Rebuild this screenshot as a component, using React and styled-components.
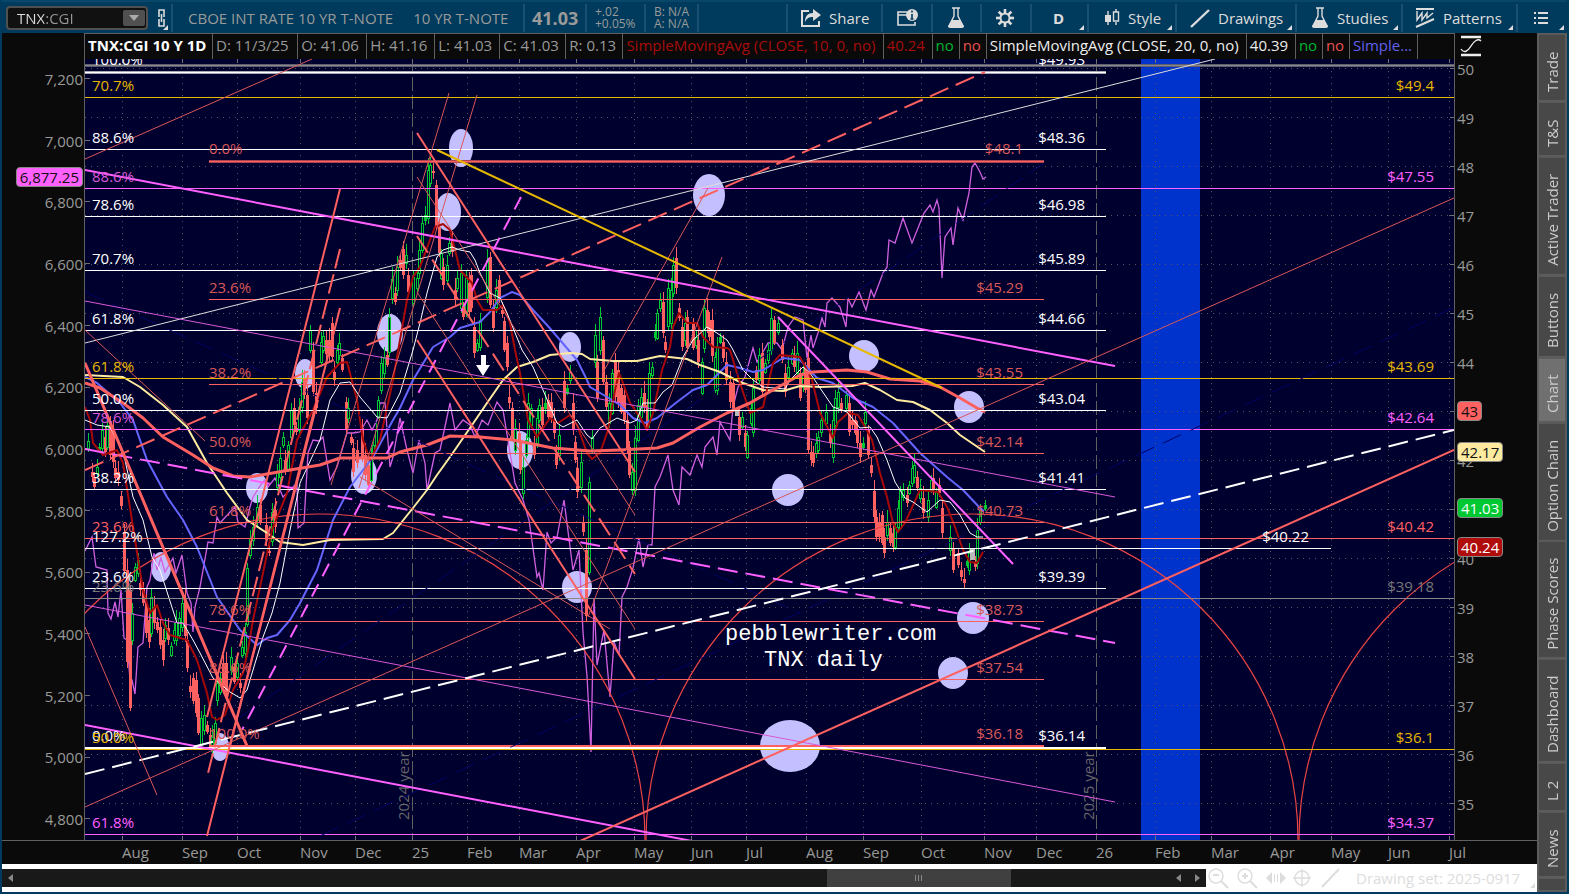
import React from 'react'
import styled, { createGlobalStyle } from 'styled-components'

const GlobalStyle = createGlobalStyle`
  * { box-sizing: border-box; }
  body {
    margin: 0;
    background: #003a5c;
    color: #999;
    font-family: 'Open Sans', 'Noto Sans', sans-serif;
    font-size: 15px;
  }
  button, select { font: inherit; }
`

const GREEN = '#00c832'
const RED = '#ff6060'
const PINK = '#ff60ff'
const GOLD = '#e6b800'
const NIGHT = '#00002e'

const Page = styled.main`
  min-height: 100vh;
  padding: 0 2px 2px;
  background: #003a5c;
  overflow: hidden;
`

/* ---------- toolbar ---------- */

const Toolbar = styled.header`
  display: flex;
  align-items: center;
  height: 33px;
  border-top: 2px solid #08466a;
  white-space: nowrap;
`

const Cell = styled.div`
  flex: none;
  display: flex;
  align-items: center;
  width: ${p => p.$w}px;
  height: 28px;
  padding-left: ${p => p.$pad || 8}px;
  border-right: ${p => (p.$open ? '0' : '2px')} solid #1a4f74;
  color: #9a9a9a;
  gap: 20px;
`

const Fill = styled(Cell)`
  flex: 1;
`

const Description = styled.span`
  font-size: 15px;
`

const LastPrice = styled.strong`
  font-size: 18px;
`

const Stack = styled.div`
  font-size: 12px;
  line-height: 12px;
`

const SymbolSelect = styled.div`
  display: flex;
  flex: none;
  align-items: center;
  width: 142px;
  height: 24px;
  margin-left: 4px;
  border: 2px solid #505050;
  border-radius: 4px;
  background: #111;
`

const Select = styled.select`
  flex: 1;
  height: 20px;
  padding: 0 9px;
  border: 0;
  background: linear-gradient(90deg, #e0e0e0 36px, #999 36px);
  background-clip: text;
  color: transparent;
  appearance: none;
  font-size: 15px;
  line-height: 20px;
`

const Arrow = styled.span`
  display: flex;
  align-items: center;
  justify-content: center;
  width: 22px;
  height: 16px;
  margin-right: 1px;
  border-radius: 2px;
  background: #505050;
  pointer-events: none;
`

const ToolButton = styled.button`
  position: relative;
  flex: none;
  display: flex;
  align-items: center;
  gap: 8px;
  width: ${p => p.$w}px;
  height: 28px;
  padding: 0 0 0 ${p => p.$pad}px;
  border: 0;
  border-right: ${p => (p.$open ? '0' : '2px')} solid #1a4f74;
  background: transparent;
  color: #ddd;
  font-weight: ${p => (p.$bold ? 700 : 400)};
  &::after {
    content: '';
    display: ${p => (p.$menu ? 'block' : 'none')};
    position: absolute;
    right: 3px;
    bottom: 2px;
    border-left: 5px solid transparent;
    border-bottom: 5px solid #ddd;
  }
`

const Icon = ({ w = 20, h = 22, children }) => (
  <svg width={w} height={h} viewBox={`0 0 ${w} ${h}`} fill='none' stroke='#ddd' strokeWidth='2' aria-hidden='true'>
    {children}
  </svg>
)

const LinkIcon = () => (
  <Icon w={12} h={20}>
    <path d='M3 9V2h5v7M3 11v7h5v-7M5.5 6v8' strokeWidth='1.6' />
  </Icon>
)

const ShareIcon = () => (
  <Icon>
    <path d='M8 4H1v15h17v-5' />
    <path d='M12 2l8 6-8 6v-4c-4 0-6 1-8 5 0-6 3-9 8-9z' fill='#ddd' stroke='none' />
  </Icon>
)

const InfoIcon = () => (
  <Icon w={22}>
    <path d='M10 5H1v13h17v-3M1 8h9' strokeWidth='1.6' />
    <circle cx='15' cy='8' r='6' fill='#ddd' stroke='none' />
    <path d='M15 7v5M15 3.5v2M13.500 12h3' stroke='#003a5c' strokeWidth='1.6' />
  </Icon>
)

const FlaskIcon = () => (
  <Icon w={18}>
    <path d='M5 1h8M7 1v8L2 19h14L11 9V1' strokeWidth='1.4' />
    <path d='M5 13h8l4 6q0 2-2 2H3q-2 0-2-2z' fill='#ddd' stroke='none' />
  </Icon>
)

const GearIcon = () => (
  <Icon w={18} h={18}>
    <circle cx='9' cy='9' r='4.500' />
    {[0, 45, 90, 135, 180, 225, 270, 315].map(a => (
      <path key={a} d='M9 0v4' strokeWidth='2.600' transform={`rotate(${a} 9 9)`} />
    ))}
  </Icon>
)

const StyleIcon = () => (
  <Icon w={16}>
    <path d='M4 4v14M12 2v3M12 15v3' strokeWidth='1.4' />
    <path d='M1 8h6v7H1z' fill='#ddd' stroke='none' />
    <path d='M9.500 5h5v9h-5z' strokeWidth='1.4' />
  </Icon>
)

const LineIcon = () => (
  <Icon>
    <path d='M1 20L19 3' strokeWidth='2.400' />
  </Icon>
)

const PatternIcon = () => (
  <Icon>
    <path d='M1 2h18M1 20l18-8' />
    <path d='M2 4v9l5-7v7l5-7v5l6-5' strokeWidth='1.4' />
  </Icon>
)

const ListIcon = () => (
  <Icon w={14} h={14}>
    <path d='M4 2h10M4 7h10M4 12h10M0 2h2M0 7h2M0 12h2' />
  </Icon>
)

const AxisIcon = () => (
  <Icon w={22} h={24}>
    <path d='M1 4h20M1 22h20' stroke='#eee' strokeWidth='2.400' />
    <path d='M1 16c3 5 7 2 10-3s7-8 10-5' stroke='#eee' strokeWidth='1.400' />
  </Icon>
)

const tools = [
  { w: 95, pad: 13, icon: <ShareIcon />, label: 'Share' },
  { w: 50, pad: 14, icon: <InfoIcon />, title: 'Info' },
  { w: 49, pad: 14, icon: <FlaskIcon />, title: 'Lab' },
  { w: 50, pad: 14, icon: <GearIcon />, title: 'Settings' },
  { w: 57, pad: 21, label: 'D', menu: true, bold: true },
  { w: 88, pad: 15, icon: <StyleIcon />, label: 'Style', menu: true },
  { w: 120, pad: 13, icon: <LineIcon />, label: 'Drawings', menu: true },
  { w: 106, pad: 14, icon: <FlaskIcon />, label: 'Studies', menu: true },
  { w: 115, pad: 12, icon: <PatternIcon />, label: 'Patterns', menu: true },
  { w: 49, pad: 16, icon: <ListIcon />, title: 'List', menu: true, open: true }
]

/* ---------- study strip ---------- */

const Body = styled.div`
  display: flex;
  background: #0a0a0a;
`

const ChartColumn = styled.section`
  flex: 1;
  min-width: 0;
  background: #0a0a0a;
`

const Strip = styled.div`
  display: grid;
  grid-template-columns: 82px minmax(0, 1fr) 82px;
  height: 26px;
`

const StudyCells = styled.div`
  display: grid;
  grid-template-columns: ${p => p.$widths.map(w => `minmax(0, ${w}fr)`).join(' ')};
  border: 1px solid #606060;
  border-right: 0;
`

const StudyCell = styled.span`
  padding-left: 3px;
  border-right: 1px solid #606060;
  color: ${p => p.$color || '#999'};
  font-weight: ${p => (p.$bold ? 700 : 400)};
  font-size: 15px;
  line-height: 23px;
  white-space: nowrap;
  overflow: hidden;
`

const StripIcon = styled.div`
  padding-left: 5px;
`

const studies = [
  [128, 'TNX:CGI 10 Y 1D', '#fff', true],
  [85, 'D: 11/3/25'],
  [69, 'O: 41.06'],
  [68, 'H: 41.16'],
  [65, 'L: 41.03'],
  [66, 'C: 41.03'],
  [57, 'R: 0.13'],
  [260, 'SimpleMovingAvg (CLOSE, 10, 0, no)', '#a80c0c'],
  [49, '40.24', '#a80c0c'],
  [27, 'no', '#00b432'],
  [27, 'no', '#e65050'],
  [260, 'SimpleMovingAvg (CLOSE, 20, 0, no)', '#eee'],
  [49, '40.39', '#eee'],
  [27, 'no', '#00b432'],
  [27, 'no', '#e65050'],
  [68, 'Simple...', '#6060f0'],
  [37, '']
]

/* ---------- chart ---------- */

const PlotRow = styled.div`
  display: grid;
  grid-template-columns: 82px minmax(0, 1fr) 82px;
`

const Plot = styled.div`
  border: solid #606060;
  border-width: 0 1px;
`

const Canvas = styled.svg`
  display: block;
  width: 100%;
  height: auto;
  background: ${NIGHT};
  font-size: 15px;
`

const Axis = styled.div`
  position: relative;
  display: flex;
  flex-direction: column;
  justify-content: space-between;
  padding: ${p => (p.$left ? '10px 1px 11px 0' : '0 0 26px 2px')};
  text-align: ${p => (p.$left ? 'right' : 'left')};
  line-height: 20px;
`

const Badge = styled.span`
  position: absolute;
  top: ${p => ((p.$y - 59) / 781) * 100}%;
  ${p => (p.$left ? 'right: 1px;' : 'left: 2px;')}
  height: 20px;
  padding: 0 3px;
  border: 1px solid #888;
  border-radius: 4px;
  background: ${p => p.$bg};
  color: ${p => p.$fg || '#111'};
  line-height: 18px;
`

const months = [
  [122, 'Aug'], [182, 'Sep'], [237, 'Oct'], [300, 'Nov'], [355, 'Dec'], [412, '25'],
  [467, 'Feb'], [519, 'Mar'], [576, 'Apr'], [634, 'May'], [691, 'Jun'], [746, 'Jul'],
  [806, 'Aug'], [863, 'Sep'], [921, 'Oct'], [984, 'Nov'], [1036, 'Dec'], [1096, '26'],
  [1155, 'Feb'], [1211, 'Mar'], [1270, 'Apr'], [1331, 'May'], [1388, 'Jun'], [1449, 'Jul']
]

const monthSpans = months.map(([x], i) => (months[i + 1] ? months[i + 1][0] : 1537) - x)

const TimeAxis = styled.div`
  display: grid;
  grid-template-columns: 120fr ${monthSpans.map(s => `${s}fr`).join(' ')};
  height: 24px;
  border-top: 1px solid #606060;
  line-height: 23px;
  white-space: nowrap;
`

const Month = styled.span`
  min-width: 0;
`

// [x, body top, body bottom, up]
const candles = [
  [88, 441, 448, 1], [92, 472, 477, 0], [94, 477, 487, 0], [97, 467, 473, 1], [99, 447, 450, 1], [102, 430, 448, 1],
  [105, 437, 452, 0], [107, 425, 447, 1], [110, 425, 455, 0], [113, 432, 462, 0], [115, 468, 478, 0], [118, 472, 480, 0],
  [121, 496, 506, 0], [124, 532, 571, 0], [127, 570, 662, 0], [130, 590, 708, 0], [132, 613, 640, 1], [135, 567, 580, 1],
  [138, 560, 573, 1], [140, 583, 590, 0], [143, 588, 603, 0], [146, 603, 633, 0], [149, 620, 642, 0], [151, 597, 633, 1],
  [154, 607, 623, 0], [157, 622, 630, 0], [160, 627, 645, 0], [163, 640, 660, 0], [165, 625, 638, 1], [168, 628, 640, 0],
  [171, 646, 655, 1], [174, 630, 640, 1], [176, 622, 640, 1], [179, 618, 635, 1], [182, 603, 627, 1], [185, 600, 636, 0],
  [187, 640, 668, 0], [190, 686, 692, 0], [193, 678, 701, 0], [196, 680, 713, 0], [198, 698, 733, 0], [201, 718, 745, 1],
  [204, 715, 730, 1], [207, 725, 732, 0], [210, 735, 745, 0], [212, 737, 750, 1], [215, 723, 743, 1], [217, 683, 700, 1],
  [220, 678, 692, 1], [223, 663, 687, 0], [226, 663, 692, 0], [231, 657, 670, 1], [234, 667, 682, 0], [237, 663, 677, 1],
  [240, 683, 688, 0], [242, 647, 655, 1], [245, 632, 653, 1], [247, 568, 624, 1], [250, 538, 555, 1], [253, 527, 540, 1],
  [257, 507, 520, 1], [260, 505, 522, 0], [266, 525, 540, 0], [269, 551, 553, 0], [272, 512, 541, 1], [275, 510, 527, 0],
  [277, 472, 487, 1], [280, 458, 477, 1], [283, 437, 445, 1], [285, 460, 470, 0], [288, 445, 470, 1], [291, 410, 437, 1],
  [294, 408, 425, 0], [296, 428, 432, 0], [299, 407, 430, 1], [302, 382, 407, 1], [304, 378, 395, 0], [307, 395, 418, 0],
  [310, 330, 350, 1], [313, 350, 392, 0], [316, 393, 408, 0], [321, 342, 362, 1], [323, 336, 350, 1], [326, 340, 354, 0],
  [329, 340, 356, 0], [332, 323, 357, 0], [334, 372, 380, 0], [337, 350, 362, 1], [339, 343, 355, 1], [342, 358, 370, 0],
  [346, 402, 430, 0], [348, 408, 418, 1], [351, 437, 443, 0], [353, 448, 472, 0], [357, 450, 463, 0], [362, 428, 457, 0],
  [365, 455, 475, 0], [368, 465, 485, 0], [371, 457, 480, 1], [373, 445, 453, 1], [376, 430, 447, 1], [378, 400, 417, 1],
  [381, 363, 390, 1], [384, 357, 373, 1], [387, 355, 365, 0], [389, 317, 352, 1], [392, 279, 298, 1], [395, 293, 302, 0],
  [397, 267, 290, 1], [400, 260, 268, 0], [403, 249, 275, 0], [406, 255, 263, 1], [408, 275, 292, 0], [413, 277, 303, 1],
  [417, 278, 288, 1], [419, 250, 273, 1], [422, 223, 250, 1], [425, 215, 220, 1], [428, 170, 218, 1], [430, 165, 183, 1],
  [433, 171, 173, 0], [436, 185, 227, 0], [439, 227, 253, 0], [441, 253, 278, 1], [443, 267, 285, 0], [447, 265, 280, 1],
  [449, 243, 253, 1], [452, 240, 252, 0], [455, 290, 300, 0], [457, 278, 288, 1], [461, 273, 308, 1], [463, 307, 317, 0],
  [466, 278, 313, 1], [469, 283, 312, 0], [471, 275, 308, 0], [474, 327, 353, 0], [477, 343, 350, 1], [480, 320, 347, 1],
  [487, 260, 297, 1], [490, 257, 305, 0], [493, 307, 328, 0], [496, 290, 307, 1], [499, 280, 300, 0], [502, 310, 314, 0],
  [504, 321, 350, 0], [507, 343, 367, 0], [509, 397, 403, 0], [512, 408, 438, 0], [515, 428, 450, 1], [519, 433, 443, 0],
  [520, 443, 470, 0], [523, 467, 493, 1], [526, 440, 455, 1], [528, 403, 437, 1], [531, 408, 425, 1], [534, 443, 455, 0],
  [537, 418, 443, 1], [539, 405, 420, 1], [542, 407, 425, 0], [545, 403, 408, 1], [548, 400, 417, 0], [551, 402, 418, 0],
  [554, 420, 433, 0], [556, 453, 465, 0], [559, 435, 455, 1], [564, 381, 408, 0], [567, 388, 393, 1], [570, 372, 380, 1],
  [573, 403, 430, 0], [575, 442, 460, 0], [577, 468, 492, 0], [581, 462, 487, 1], [583, 523, 532, 0], [586, 550, 616, 0],
  [589, 482, 572, 1], [592, 437, 450, 1], [595, 335, 362, 1], [597, 362, 398, 0], [600, 317, 350, 1], [603, 340, 382, 0],
  [606, 382, 407, 0], [609, 403, 423, 1], [612, 373, 413, 1], [615, 360, 397, 0], [618, 370, 403, 0], [621, 388, 412, 0],
  [624, 395, 420, 0], [627, 420, 448, 0], [629, 447, 475, 0], [632, 472, 490, 1], [635, 438, 490, 1], [638, 405, 440, 1],
  [641, 397, 417, 1], [644, 393, 407, 0], [647, 405, 428, 0], [649, 373, 422, 1], [652, 367, 375, 1], [655, 332, 337, 1],
  [657, 313, 338, 1], [660, 300, 308, 1], [663, 302, 333, 0], [665, 342, 350, 0], [668, 288, 326, 1], [671, 290, 323, 1],
  [673, 265, 293, 1], [676, 258, 288, 0], [679, 308, 318, 0], [682, 327, 347, 0], [685, 323, 340, 1], [687, 317, 348, 0],
  [693, 322, 348, 0], [696, 337, 345, 1], [698, 340, 362, 0], [702, 362, 393, 1], [704, 308, 348, 1], [707, 310, 327, 0],
  [709, 320, 337, 0], [712, 320, 356, 0], [715, 357, 390, 1], [717, 347, 390, 1], [720, 337, 342, 1], [723, 342, 358, 0],
  [726, 362, 380, 0], [730, 382, 402, 0], [733, 383, 408, 0], [739, 417, 435, 0], [742, 417, 427, 1], [745, 433, 447, 0],
  [747, 435, 457, 1], [751, 408, 423, 1], [753, 388, 432, 1], [756, 370, 380, 0], [759, 355, 380, 1], [762, 353, 392, 0],
  [765, 363, 372, 1], [768, 350, 360, 1], [771, 318, 350, 1], [774, 320, 343, 0], [778, 323, 332, 1], [782, 345, 360, 0],
  [785, 373, 392, 0], [788, 367, 377, 1], [792, 353, 363, 1], [794, 355, 367, 0], [797, 353, 373, 1], [800, 373, 398, 0],
  [803, 372, 387, 1], [805, 367, 390, 0], [808, 358, 450, 0], [811, 452, 460, 0], [813, 453, 463, 0], [816, 443, 453, 1],
  [818, 437, 450, 1], [821, 420, 432, 1], [826, 412, 423, 1], [830, 433, 443, 0], [833, 420, 457, 1], [835, 398, 425, 1],
  [838, 392, 407, 1], [841, 403, 410, 0], [846, 395, 408, 1], [849, 403, 432, 0], [852, 420, 425, 0], [855, 420, 433, 0],
  [857, 430, 443, 0], [860, 443, 457, 0], [863, 443, 447, 1], [865, 412, 423, 1], [868, 430, 455, 0], [871, 465, 473, 0],
  [874, 491, 517, 0], [876, 517, 537, 0], [879, 523, 537, 0], [882, 515, 543, 0], [884, 537, 553, 0], [887, 522, 535, 1],
  [890, 528, 543, 0], [893, 533, 547, 0], [895, 527, 547, 1], [898, 508, 527, 1], [900, 490, 528, 1], [903, 490, 497, 1],
  [907, 495, 503, 0], [909, 485, 493, 1], [912, 468, 483, 1], [914, 465, 477, 1], [917, 477, 488, 0], [920, 488, 498, 1],
  [923, 498, 513, 0], [928, 500, 517, 1], [931, 480, 490, 1], [933, 478, 490, 0], [936, 492, 507, 1], [939, 485, 493, 0],
  [942, 508, 533, 0], [950, 537, 550, 1], [953, 548, 570, 0], [958, 553, 565, 0], [961, 570, 577, 0], [964, 579, 583, 0],
  [967, 561, 565, 1], [969, 553, 570, 1], [975, 563, 567, 0], [977, 530, 563, 1], [980, 510, 522, 1], [985, 505, 508, 1]
]

const averages = [
  { color: '#6464ff', width: 2, points: '85,377 97,383 120,403 133,420 147,460 167,497 183,520 197,547 217,597 240,630 257,645 267,638 277,635 290,620 300,603 317,570 333,520 350,487 373,457 393,420 400,408 413,380 427,357 433,347 450,337 460,328 480,322 490,312 500,298 512,292 520,295 533,310 547,325 560,340 577,360 587,380 590,387 607,397 620,405 633,418 645,423 657,418 677,402 693,390 707,385 727,365 740,368 753,372 763,370 783,358 800,360 817,378 833,383 853,398 873,407 893,423 920,453 947,477 963,490 980,508 984,511' },
  { color: '#ffebA0', width: 2, points: '85,375 123,377 140,387 163,405 187,427 207,463 227,493 247,520 267,533 280,542 303,545 330,540 383,539 393,533 413,508 427,490 437,475 450,457 470,428 487,403 503,380 517,367 533,362 550,355 570,353 582,354 590,359 613,361 637,361 660,356 687,359 700,365 720,372 740,382 763,390 783,391 800,386 820,387 852,386 865,383 880,390 897,400 913,402 930,410 947,423 960,435 985,452' },
  { color: '#a80808', width: 2, points: '85,407 90,420 93,443 103,455 117,450 123,463 133,527 143,590 150,613 157,605 163,623 170,635 187,640 197,660 207,693 212,717 217,720 225,715 233,690 243,673 248,650 253,620 263,573 272,530 287,493 297,440 313,410 327,377 340,363 347,362 357,400 363,440 370,460 380,440 393,380 400,340 407,300 413,277 420,267 430,240 435,227 443,224 450,230 455,250 460,270 472,283 477,300 483,310 497,310 503,305 510,323 515,350 520,373 528,420 537,437 550,418 558,423 570,415 577,425 587,453 592,459 600,453 608,430 615,390 619,373 623,383 630,403 640,417 647,430 653,413 662,370 670,347 673,327 679,313 687,323 697,323 703,337 713,347 727,348 730,350 740,383 750,413 763,407 773,363 780,355 800,357 807,370 812,380 820,413 833,438 838,422 848,413 858,415 865,427 872,440 880,473 887,497 893,523 898,532 905,523 920,490 938,492 947,507 955,527 963,550 970,562 977,563 983,552' },
  { color: '#fff', width: 1, points: '85,420 97,425 110,427 117,440 125,460 133,497 143,520 152,557 160,570 177,623 183,623 193,640 200,653 213,678 230,692 240,698 247,690 253,670 263,637 272,613 280,583 290,530 300,483 312,457 320,440 330,400 340,383 350,382 360,397 377,417 387,418 400,393 413,350 420,323 427,293 437,257 443,250 452,247 460,250 470,252 475,260 480,273 490,293 500,298 507,313 522,350 533,367 543,390 557,423 563,427 577,420 587,435 592,439 600,428 617,418 630,423 637,420 643,403 655,403 663,392 672,385 683,357 693,340 707,327 717,333 727,340 732,348 743,370 753,380 763,387 785,389 790,380 803,367 810,373 820,388 833,407 847,412 860,428 870,427 877,437 887,460 895,482 905,498 913,502 927,512 940,500 950,502 960,515 970,533 977,537 983,537' },
  { color: RED, width: 3, points: '85,383 100,388 123,403 143,418 163,437 193,455 213,468 233,476 250,477 267,474 290,470 320,465 340,458 387,458 400,452 427,445 450,436 480,437 513,440 553,448 590,451 620,450 657,448 673,443 700,427 727,413 750,403 773,390 800,375 813,372 847,370 867,372 890,379 920,381 940,387 960,398 977,408 985,412' }
]

const spx = '85,551 92,537 96,567 107,570 108,613 111,619 115,602 118,617 121,590 124,638 127,640 130,680 132,680 135,694 138,647 143,643 147,587 150,580 154,553 157,570 161,558 165,572 173,558 176,573 182,555 187,593 191,603 193,632 195,607 200,587 208,542 213,543 217,517 220,523 230,512 235,507 238,522 245,527 250,507 253,497 262,483 265,480 268,487 275,478 283,497 287,493 297,483 298,528 304,523 308,453 313,440 319,441 323,437 330,480 337,467 347,433 353,433 360,432 367,420 372,430 377,420 380,403 385,403 390,467 393,457 400,418 407,450 413,473 419,440 425,463 427,490 435,453 440,450 450,403 455,430 463,420 470,425 475,437 482,420 488,425 497,402 503,410 515,483 523,500 529,520 537,577 539,573 543,590 547,532 551,543 557,537 564,500 573,570 579,550 583,632 587,676 591,752 594,598 597,665 604,630 610,697 614,642 619,655 622,597 627,587 633,568 639,538 643,567 648,545 652,545 655,487 660,477 668,455 673,490 679,505 682,467 690,475 697,455 702,467 705,447 713,437 717,455 720,422 730,440 733,407 738,387 745,377 753,348 757,362 763,352 768,343 777,343 782,350 788,327 795,317 803,320 807,358 811,335 813,348 818,333 822,318 825,327 827,303 832,298 840,307 846,327 848,298 852,307 859,292 866,310 871,290 874,297 883,273 887,267 889,240 895,243 903,218 912,243 920,223 924,213 930,205 933,212 937,200 939,208 942,278 945,237 951,228 953,245 958,208 963,220 969,193 972,167 975,163 980,172 983,179 986,177'

// [y, x1, x2, color, width]
const levels = [
  [65, 85, 1454, '#5e5e70', 3], [65, 85, 1454, '#888', 1], [72, 85, 1106, '#a8a8b4', 3], [72, 85, 1106, '#fff', 1],
  [97, 85, 1454, GOLD, 1], [149, 85, 1106, '#fff', 1],
  [188, 85, 1454, PINK, 1], [216, 85, 1106, '#fff', 1], [270, 85, 1106, '#fff', 1], [330, 85, 1106, '#fff', 1],
  [378, 85, 1454, GOLD, 1], [410, 85, 1106, '#fff', 1], [429, 85, 1454, PINK, 1], [489, 85, 1106, '#fff', 1],
  [538, 85, 1454, RED, 1], [548, 85, 1331, '#fff', 1], [588, 85, 1106, '#fff', 1], [598, 85, 1454, '#888', 1],
  [834, 85, 1454, PINK, 1], [161, 209, 1044, '#a84450', 3], [161, 209, 1044, RED, 1], [299, 209, 1044, RED, 1],
  [384, 209, 1044, RED, 1], [453, 209, 1044, RED, 1], [522, 209, 1044, RED, 1], [621, 209, 1044, RED, 1],
  [679, 209, 1044, RED, 1], [746, 209, 1044, RED, 2], [748, 85, 1106, '#fff', 2], [749, 85, 1454, GOLD, 1]
]

// [x1, y1, x2, y2, color, width, dash]
const trends = [
  [85, 292, 800, 613, '#000066', 1, '20 10'],
  [240, 717, 1044, 163, '#000066', 1, '20 10'],
  [320, 836, 1453, 308, '#000066', 1, '20 10'],
  [85, 159, 312, 59, '#d85858', 1],
  [85, 170, 1115, 366, PINK, 2],
  [85, 343, 1215, 59, '#ddd', 1],
  [85, 301, 1115, 497, '#d858d8', 1],
  [85, 605, 1115, 802, '#d858d8', 1],
  [85, 725, 692, 841, PINK, 2],
  [85, 449, 1115, 643, PINK, 2, '20 8'],
  [521, 197, 242, 730, PINK, 2, '14 9'],
  [778, 317, 1013, 564, PINK, 2],
  [85, 330, 205, 441, '#d85858', 1],
  [85, 470, 985, 72, RED, 2, '20 8'],
  [85, 807, 1454, 198, '#d85858', 1],
  [580, 841, 1454, 450, RED, 2],
  [85, 774, 1454, 430, '#fff', 2, '20 8'],
  [85, 627, 157, 795, '#d85858', 1],
  [85, 363, 247, 746, RED, 3],
  [340, 189, 207, 717, RED, 2],
  [340, 249, 207, 777, RED, 2, '20 6'],
  [340, 308, 207, 836, RED, 2],
  [318, 400, 230, 746, RED, 2],
  [449, 93, 331, 485, '#d85858', 1],
  [477, 95, 359, 488, '#d85858', 1],
  [417, 133, 635, 472, RED, 2],
  [417, 177, 635, 515, '#d85858', 1],
  [417, 236, 635, 574, RED, 2, '20 8'],
  [417, 292, 635, 629, '#d85858', 1],
  [417, 340, 635, 679, RED, 2],
  [360, 477, 610, 629, '#d85858', 1],
  [708, 188, 602, 374, '#d85858', 1],
  [722, 257, 588, 617, '#d85858', 1],
  [437, 150, 942, 388, GOLD, 2]
]

const bubbles = [
  [461, 148, 12, 19], [448, 212, 13, 19], [390, 333, 13, 19], [305, 374, 10, 15], [257, 488, 11, 15],
  [364, 475, 13, 19], [161, 567, 10, 15], [220, 747, 9, 14], [520, 450, 13, 19], [570, 347, 11, 15],
  [577, 587, 15, 16], [709, 195, 16, 21], [864, 356, 15, 16], [969, 407, 15, 16], [788, 490, 16, 16],
  [973, 618, 16, 16], [953, 673, 15, 16], [790, 746, 30, 26]
]

// [x, baseline, text, color, anchor]
const labels = [
  [92, 65, '100.0%', '#fff'], [1085, 65, '$49.93', '#fff', 'end'],
  [92, 91, '70.7%', GOLD], [1434, 91, '$49.4', GOLD, 'end'],
  [92, 143, '88.6%', '#fff'], [1085, 143, '$48.36', '#fff', 'end'],
  [92, 182, '88.6%', '#d858d8'], [1434, 182, '$47.55', PINK, 'end'],
  [92, 210, '78.6%', '#fff'], [1085, 210, '$46.98', '#fff', 'end'],
  [92, 264, '70.7%', '#fff'], [1085, 264, '$45.89', '#fff', 'end'],
  [92, 324, '61.8%', '#fff'], [1085, 324, '$44.66', '#fff', 'end'],
  [92, 372, '61.8%', GOLD], [1434, 372, '$43.69', GOLD, 'end'],
  [92, 404, '50.0%', '#fff'], [1085, 404, '$43.04', '#fff', 'end'],
  [92, 423, '78.6%', '#d858d8'], [1434, 423, '$42.64', PINK, 'end'],
  [92, 483, '38.2%', '#fff'], [1085, 483, '$41.41', '#fff', 'end'],
  [92, 532, '23.6%', RED], [1434, 532, '$40.42', RED, 'end'],
  [92, 542, '127.2%', '#fff'], [1309, 542, '$40.22', '#fff', 'end'],
  [92, 592, '23.6%', '#777'], [1434, 592, '$39.18', '#777', 'end'],
  [92, 582, '23.6%', '#fff'], [1085, 582, '$39.39', '#fff', 'end'],
  [92, 741, '0.0%', '#fff'], [1085, 741, '$36.14', '#fff', 'end'],
  [92, 743, '50.0%', GOLD], [1434, 743, '$36.1', GOLD, 'end'],
  [92, 828, '61.8%', PINK], [1434, 828, '$34.37', PINK, 'end'],
  [209, 154, '0.0%', '#d85858'], [1023, 154, '$48.1', '#d85858', 'end'],
  [209, 293, '23.6%', '#d85858'], [1023, 293, '$45.29', '#d85858', 'end'],
  [209, 378, '38.2%', '#d85858'], [1023, 378, '$43.55', '#d85858', 'end'],
  [209, 447, '50.0%', '#d85858'], [1023, 447, '$42.14', '#d85858', 'end'],
  [209, 516, '61.8%', '#d85858'], [1023, 516, '$40.73', '#d85858', 'end'],
  [209, 615, '78.6%', '#d85858'], [1023, 615, '$38.73', '#d85858', 'end'],
  [209, 673, '88.6%', '#d85858'], [1023, 673, '$37.54', '#d85858', 'end'],
  [209, 739, '100.0%', '#d85858'], [1023, 739, '$36.18', '#d85858', 'end']
]

const priceY = price => Math.round(68 + (50 - price) * 49)
const prices = [50, 49, 48, 47, 46, 45, 44, 43, 42, 41, 40, 39, 38, 37, 36, 35]
const spxTicks = [7200, 7000, 6800, 6600, 6400, 6200, 6000, 5800, 5600, 5400, 5200, 5000, 4800]

const Candle = ({ x, top, bottom, up }) => {
  const reach = 4 + ((x * 7) % 9)
  const color = up ? GREEN : RED
  return (
    <g shapeRendering='crispEdges'>
      <path d={`M${x + 0.5} ${top - reach}V${bottom + reach / 2}`} stroke={color} />
      <rect
        x={up ? x - 0.5 : x - 1}
        y={top}
        width={up ? 2 : 3}
        height={bottom - top}
        fill={up && bottom - top > 5 ? NIGHT : color}
        stroke={up ? color : 'none'}
      />
    </g>
  )
}

const Chart = () => (
  <Canvas viewBox='85 59 1369 781' role='img' aria-label='TNX daily'>
    <rect x='1141' y='59' width='59' height='781' fill='#0032cc' />

    <g stroke='#55555f' strokeDasharray='1 5' shapeRendering='crispEdges'>
      {prices.map(p => <path key={p} d={`M85 ${priceY(p)}.5H1454`} />)}
      {months.filter(m => !Number(m[1])).map(([x]) => <path key={x} d={`M${x}.5 59V840`} />)}
    </g>
    <g stroke='#606060' strokeDasharray='14 4' shapeRendering='crispEdges'>
      <path d='M412.500 59V840M1096.500 59V840' />
    </g>
    <g stroke='#707070' shapeRendering='crispEdges'>
      {prices.map(p => <path key={p} d={`M1450 ${priceY(p)}.5h4`} />)}
      {spxTicks.map((t, i) => <path key={t} d={`M85 ${Math.round(78 + i * 61.7)}.5h5`} />)}
      {months.map(([x]) => <path key={x} d={`M${x}.5 59v4M${x}.5 836v4`} />)}
    </g>
    <g fill='#666' fontSize='15'>
      <text transform='translate(409 820) rotate(-90)'>2024 year</text>
      <text transform='translate(1094 820) rotate(-90)'>2025 year</text>
    </g>

    {bubbles.map(([cx, cy, rx, ry]) => (
      <ellipse key={`${cx}-${cy}`} cx={cx} cy={cy} rx={rx} ry={ry} fill='#c4c0ff' />
    ))}

    <polyline points={spx} fill='none' stroke='#d060e0' strokeWidth='1.3' />
    {candles.map(([x, top, bottom, up]) => <Candle key={x} x={x} top={top} bottom={bottom} up={up} />)}
    <path d='M735 408h4v8h-4zM970 548h5v12h-5z' fill='#bbb' />

    <g fill='none' stroke='#e84444' strokeWidth='1.2'>
      <circle cx='319' cy='840' r='326' />
      <circle cx='972' cy='840' r='326' />
      <circle cx='1625' cy='840' r='326' />
    </g>

    {averages.map(a => (
      <polyline key={a.color} points={a.points} fill='none' stroke={a.color} strokeWidth={a.width} strokeLinejoin='round' />
    ))}

    {levels.map(([y, x1, x2, color, width]) => (
      <path
        key={`${y}${color}`}
        d={width === 2 ? `M${x1} ${y}H${x2}` : `M${x1} ${y}.5H${x2}`}
        stroke={color}
        strokeWidth={width}
        shapeRendering='crispEdges'
      />
    ))}
    {trends.map(([x1, y1, x2, y2, color, width, dash]) => (
      <line key={`${x1}-${y1}-${y2}`} x1={x1} y1={y1} x2={x2} y2={y2} stroke={color} strokeWidth={width} strokeDasharray={dash} />
    ))}

    <path d='M481 355h5v10h4l-7 11-7-11h5z' fill='#fff' />
    {labels.map(([x, y, text, color, anchor]) => (
      <text key={`${x}-${y}`} x={x} y={y} fill={color} textAnchor={anchor}>{text}</text>
    ))}
    <g fill='#fff' fontFamily="'Liberation Mono', monospace" fontSize='22'>
      <text x='725' y='640'>pebblewriter.com</text>
      <text x='764' y='666'>TNX daily</text>
    </g>
  </Canvas>
)

/* ---------- side tabs ---------- */

const Tabs = styled.nav`
  display: flex;
  flex: none;
  flex-direction: column;
  gap: 3px;
  width: 30px;
  padding: 2px;
  background: #5c5c5c;
`

const Tab = styled.button`
  flex: ${p => p.$size} 1 0;
  padding: 0 0 8px;
  border: 0;
  background: ${p => (p.$active ? '#707070' : '#484848')};
  color: #ccc;
  font-size: 15px;
  line-height: 24px;
  writing-mode: vertical-rl;
  transform: rotate(180deg);
`

const tabs = [
  [57, 'Trade'], [44, 'T&S'], [108, 'Active Trader'], [71, 'Buttons'], [54, 'Chart'], [108, 'Option Chain'],
  [107, 'Phase Scores'], [93, 'Dashboard'], [38, 'L 2'], [55, 'News'], [3, '']
]

/* ---------- bottom bar ---------- */

const BottomBar = styled.footer`
  display: flex;
  align-items: center;
  height: 28px;
  border-bottom: 1px solid #fff;
  background: #fff;
`

const Scrollbar = styled.div`
  flex: 1;
  display: grid;
  grid-template-columns: 824fr 184fr 195fr;
  height: 18px;
  background: #191919;
`

const ScrollEnd = styled.div`
  display: flex;
  align-items: center;
  justify-content: ${p => (p.$right ? 'flex-end' : 'flex-start')};
  gap: 14px;
  padding: 0 6px;
`

const Thumb = styled.div`
  display: flex;
  align-items: center;
  justify-content: center;
  gap: 1px;
  background: #404040;
  i {
    width: 1px;
    height: 6px;
    margin-right: 1px;
    background: #888;
  }
`

const DrawTools = styled.div`
  position: relative;
  flex: none;
  display: flex;
  align-items: center;
  gap: 7px;
  width: 331px;
  padding-left: 2px;
  color: #ddd;
  svg { stroke: #ddd; }
  span { margin-left: 9px; white-space: nowrap; }
  &::after {
    content: '';
    position: absolute;
    right: 2px;
    bottom: 1px;
    border-left: 5px solid transparent;
    border-bottom: 5px solid #ddd;
  }
`

const Triangle = ({ flip }) => (
  <svg width='5' height='8' viewBox='0 0 5 8' aria-hidden='true'>
    <path d={flip ? 'M0 0l5 4-5 4z' : 'M5 0v8L0 4z'} fill='#888' />
  </svg>
)

const App = () => (
  <Page>
    <GlobalStyle />
    <Toolbar>
      <SymbolSelect>
        <Select aria-label='Symbol' defaultValue='TNX:CGI'>
          <option>TNX:CGI</option>
        </Select>
        <Arrow>
          <svg width='10' height='6' viewBox='0 0 10 6'><path d='M0 0h10L5 6z' fill='#aaa' /></svg>
        </Arrow>
      </SymbolSelect>
      <ToolButton $w={25} $pad={8} $menu title='Link'><LinkIcon /></ToolButton>
      <Cell $w={352} $pad={15}>
        <Description>CBOE INT RATE 10 YR T-NOTE</Description>
        <Description>10 YR T-NOTE</Description>
      </Cell>
      <Cell $w={62} $pad={7}><LastPrice>41.03</LastPrice></Cell>
      <Cell $w={59}><Stack>+.02<br />+0.05%</Stack></Cell>
      <Cell $w={53}><Stack>B: N/A<br />A: N/A</Stack></Cell>
      <Fill />
      {tools.map(t => (
        <ToolButton
          key={t.label || t.title}
          $w={t.w}
          $pad={t.pad}
          $menu={t.menu}
          $bold={t.bold}
          $open={t.open}
          title={t.title}
        >
          {t.icon}{t.label}
        </ToolButton>
      ))}
    </Toolbar>

    <Body>
      <ChartColumn>
        <Strip>
          <span />
          <StudyCells $widths={studies.map(s => s[0])}>
            {studies.map(([w, text, color, bold], i) => (
              <StudyCell key={i} $color={color} $bold={bold}>{text}</StudyCell>
            ))}
          </StudyCells>
          <StripIcon><AxisIcon /></StripIcon>
        </Strip>

        <PlotRow>
          <Axis $left>
            {spxTicks.map(t => <span key={t}>{t.toLocaleString('en-US')}</span>)}
            <Badge $left $y={167} $bg={PINK}>6,877.25</Badge>
          </Axis>
          <Plot><Chart /></Plot>
          <Axis>
            {prices.map(p => <span key={p}>{p}</span>)}
            <Badge $y={401} $bg={RED}>43</Badge>
            <Badge $y={442} $bg='#ffeba0'>42.17</Badge>
            <Badge $y={498} $bg={GREEN} $fg='#fff'>41.03</Badge>
            <Badge $y={537} $bg='#b00c0c' $fg='#fff'>40.24</Badge>
          </Axis>
        </PlotRow>

        <TimeAxis>
          <span />
          {months.map(([x, name]) => <Month key={x}>{name}</Month>)}
        </TimeAxis>

        <BottomBar>
          <Scrollbar>
            <ScrollEnd><Triangle /></ScrollEnd>
            <Thumb><i /><i /><i /></Thumb>
            <ScrollEnd $right><Triangle /><Triangle flip /></ScrollEnd>
          </Scrollbar>
          <DrawTools>
            <Icon w={22}><circle cx='8' cy='9' r='7' strokeWidth='1.4' /><path d='M13 14l7 7M5 8h6' /></Icon>
            <Icon w={22}><circle cx='8' cy='9' r='7' strokeWidth='1.4' /><path d='M13 14l7 7M5 9h6M8 6v6' /></Icon>
            <Icon w={20}><path d='M6 5v12L0 11zM14 5v12l6-6z' fill='#ddd' stroke='none' /><path d='M8.500 7v8M11.500 7v8' strokeWidth='1' /></Icon>
            <Icon><circle cx='9' cy='11' r='7' strokeWidth='1.400' /><path d='M9 2v18M0 11h18' strokeWidth='1.400' /></Icon>
            <Icon><path d='M2 20L19 2' /></Icon>
            <span>Drawing set: 2025-0917</span>
          </DrawTools>
        </BottomBar>
      </ChartColumn>

      <Tabs>
        {tabs.map(([size, name]) => (
          <Tab key={name} $size={size} $active={name === 'Chart'} aria-label={name || 'More'}>{name}</Tab>
        ))}
      </Tabs>
    </Body>
  </Page>
)

export default App
